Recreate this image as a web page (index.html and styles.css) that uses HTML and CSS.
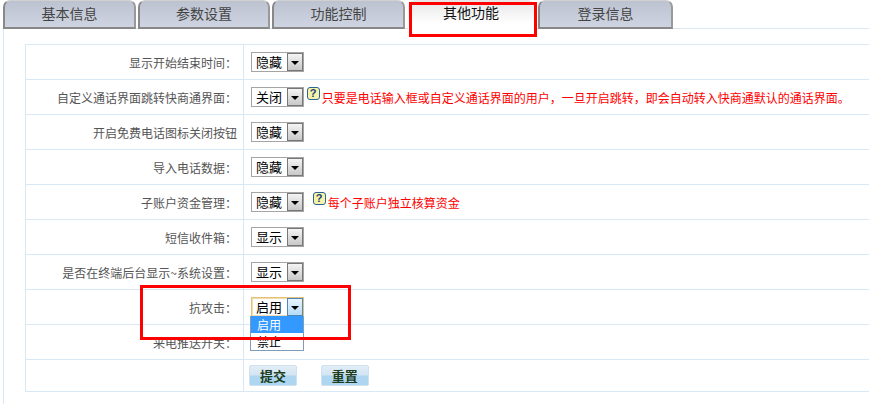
FILE: index.html
```html
<!DOCTYPE html>
<html>

<head>
    <title>其他功能</title>
    <link rel="stylesheet" href="styles.css">
</head>

<body>
    <ul class="tabs">
        <li class="tab tab-1">基本信息</li>
        <li class="tab tab-2">参数设置</li>
        <li class="tab tab-3">功能控制</li>
        <li class="tab tab-active">其他功能</li>
        <li class="tab tab-5">登录信息</li>
    </ul>

    <div class="content">
        <table class="form-table">
            <tr>
                <td class="label">显示开始结束时间：</td>
                <td class="field"><span class="select"><span class="select-value">隐藏</span><span class="select-btn"></span></span></td>
            </tr>
            <tr>
                <td class="label">自定义通话界面跳转快商通界面：</td>
                <td class="field">
                    <span class="select"><span class="select-value">关闭</span><span class="select-btn"></span></span>
                    <span class="help">?</span><span class="note">只要是电话输入框或自定义通话界面的用户，一旦开启跳转，即会自动转入快商通默认的通话界面。</span>
                </td>
            </tr>
            <tr>
                <td class="label">开启免费电话图标关闭按钮</td>
                <td class="field"><span class="select"><span class="select-value">隐藏</span><span class="select-btn"></span></span></td>
            </tr>
            <tr>
                <td class="label">导入电话数据：</td>
                <td class="field"><span class="select"><span class="select-value">隐藏</span><span class="select-btn"></span></span></td>
            </tr>
            <tr>
                <td class="label">子账户资金管理：</td>
                <td class="field">
                    <span class="select"><span class="select-value">隐藏</span><span class="select-btn"></span></span>
                    <span class="help help-far">?</span><span class="note">每个子账户独立核算资金</span>
                </td>
            </tr>
            <tr>
                <td class="label">短信收件箱：</td>
                <td class="field"><span class="select"><span class="select-value">显示</span><span class="select-btn"></span></span></td>
            </tr>
            <tr>
                <td class="label">是否在终端后台显示~系统设置：</td>
                <td class="field"><span class="select"><span class="select-value">显示</span><span class="select-btn"></span></span></td>
            </tr>
            <tr>
                <td class="label">抗攻击：</td>
                <td class="field">
                    <span class="select select-open"><span class="select-value">启用</span><span class="select-btn"></span>
                        <span class="dropdown">
                            <span class="option option-on">启用</span>
                            <span class="option">禁止</span>
                        </span>
                    </span>
                </td>
            </tr>
            <tr>
                <td class="label">来电推送开关：</td>
                <td class="field"></td>
            </tr>
            <tr class="row-buttons">
                <td class="label"></td>
                <td class="field">
                    <button class="btn" type="button">提交</button>
                    <button class="btn" type="button">重置</button>
                </td>
            </tr>
        </table>
    </div>

    <div class="mark mark-tab"></div>
    <div class="mark mark-select"></div>
</body>

</html>
```

FILE: styles.css
```css
html,
body {
    margin: 0;
    padding: 0;
    height: 100%;
    overflow: hidden;
    background: #fff;
}

body {
    font-family: "Noto Sans CJK SC", "Liberation Sans", sans-serif;
    font-size: 12px;
    color: #555;
}

/* tabs */
.tabs {
    display: flex;
    margin: 0;
    padding: 0 0 0 3px;
    height: 28px;
    list-style: none;
}

.tab {
    box-sizing: border-box;
    height: 29px;
    margin-right: 2px;
    text-align: center;
    font-size: 14px;
    line-height: 25px;
    color: #444;
    background: linear-gradient(#bcc2cf, #ced4e1);
    border: 1px solid #d0d0d0;
    border-left: 2px solid #888;
    border-right: 2px solid #999;
    border-bottom: 2px solid #888;
    border-radius: 7px 7px 0 0;
}

.tab-1 {
    width: 133px;
}

.tab-2 {
    width: 132px;
}

.tab-3 {
    width: 133px;
    margin-right: 3px;
}

.tab-active {
    width: 126px;
    height: 34px;
    margin-right: 4px;
    color: #111;
    background: linear-gradient(#e6e6e6, #fff 70%);
    border: 0;
}

.tab-5 {
    width: 135px;
}

/* form area */
.content {
    box-sizing: border-box;
    height: 376px;
    padding: 15px 0 0 21px;
    border-top: 1px solid #d8e8f5;
    border-left: 1px solid #d8e8f5;
    margin-left: 3px;
}

.form-table {
    width: 900px;
    table-layout: fixed;
    border-collapse: collapse;
}

.form-table td {
    height: 34px;
    padding: 0;
    border: 1px solid #d8e8f5;
}

.label {
    width: 211px;
    padding-right: 6px !important;
    text-align: right;
}

.field {
    padding-left: 5px !important;
    white-space: nowrap;
}

.row-buttons td {
    height: 31px;
}

/* fake select, the old windows look */
.select {
    position: relative;
    display: inline-flex;
    box-sizing: border-box;
    width: 53px;
    height: 20px;
    margin-left: 2px;
    vertical-align: middle;
    background: #fff;
    border: 1px solid #a5a5a5;
}

.select-value {
    flex: 1;
    padding-left: 4px;
    font-size: 13px;
    line-height: 18px;
    color: #000;
}

.select-btn {
    position: relative;
    width: 16px;
    background: linear-gradient(#f4f4f4, #c8c8c8);
    border: 1px solid #777;
    box-sizing: border-box;
}

.select-btn::after {
    content: "";
    position: absolute;
    left: 3px;
    top: 7px;
    border: 4px solid transparent;
    border-top: 4px solid #000;
    border-bottom: 0;
}

.select-open {
    border-color: #e5c07b;
    box-shadow: inset 0 0 0 1px #f2dcae;
}

.select-open .select-btn {
    background: linear-gradient(#e8f4fd, #b5dcf7);
    border-color: #4f88b8;
}

.dropdown {
    position: absolute;
    left: -2px;
    top: 18px;
    box-sizing: border-box;
    width: 54px;
    background: #fff;
    border: 1px solid #7f9db9;
    border-top: 0;
    z-index: 2;
}

.option {
    display: block;
    height: 17px;
    padding-left: 6px;
    font-size: 12px;
    line-height: 17px;
    color: #000;
}

.option-on {
    color: #fff;
    background: #3399ff;
}

/* help icon and red note */
.help {
    display: inline-block;
    box-sizing: border-box;
    width: 13px;
    height: 13px;
    margin: 0 2px 7px 0;
    vertical-align: middle;
    text-align: center;
    font-family: "Liberation Sans", sans-serif;
    font-size: 11px;
    font-weight: bold;
    line-height: 11px;
    color: #1c3f78;
    background: #f7f3a8;
    border: 1px solid #2a6496;
    border-radius: 3px;
}

.help-far {
    margin-left: 6px;
}

.note {
    color: #f00;
    vertical-align: middle;
}

/* buttons */
.btn {
    box-sizing: border-box;
    width: 48px;
    height: 21px;
    margin-right: 21px;
    padding: 0;
    font-family: "Noto Sans CJK SC", sans-serif;
    font-size: 13px;
    font-weight: bold;
    color: #1d3d1d;
    background: linear-gradient(#e2edf6, #d3e4f2 48%, #aed6f1 52%, #aed6f1);
    border: 1px solid #cfe0ee;
    border-radius: 2px;
}

/* red rectangles drawn over the screenshot */
.mark {
    position: absolute;
    box-sizing: border-box;
    border: 3px solid #f00;
    z-index: 5;
}

.mark-tab {
    left: 409px;
    top: 2px;
    width: 128px;
    height: 35px;
}

.mark-select {
    left: 140px;
    top: 285px;
    width: 211px;
    height: 55px;
}
```
